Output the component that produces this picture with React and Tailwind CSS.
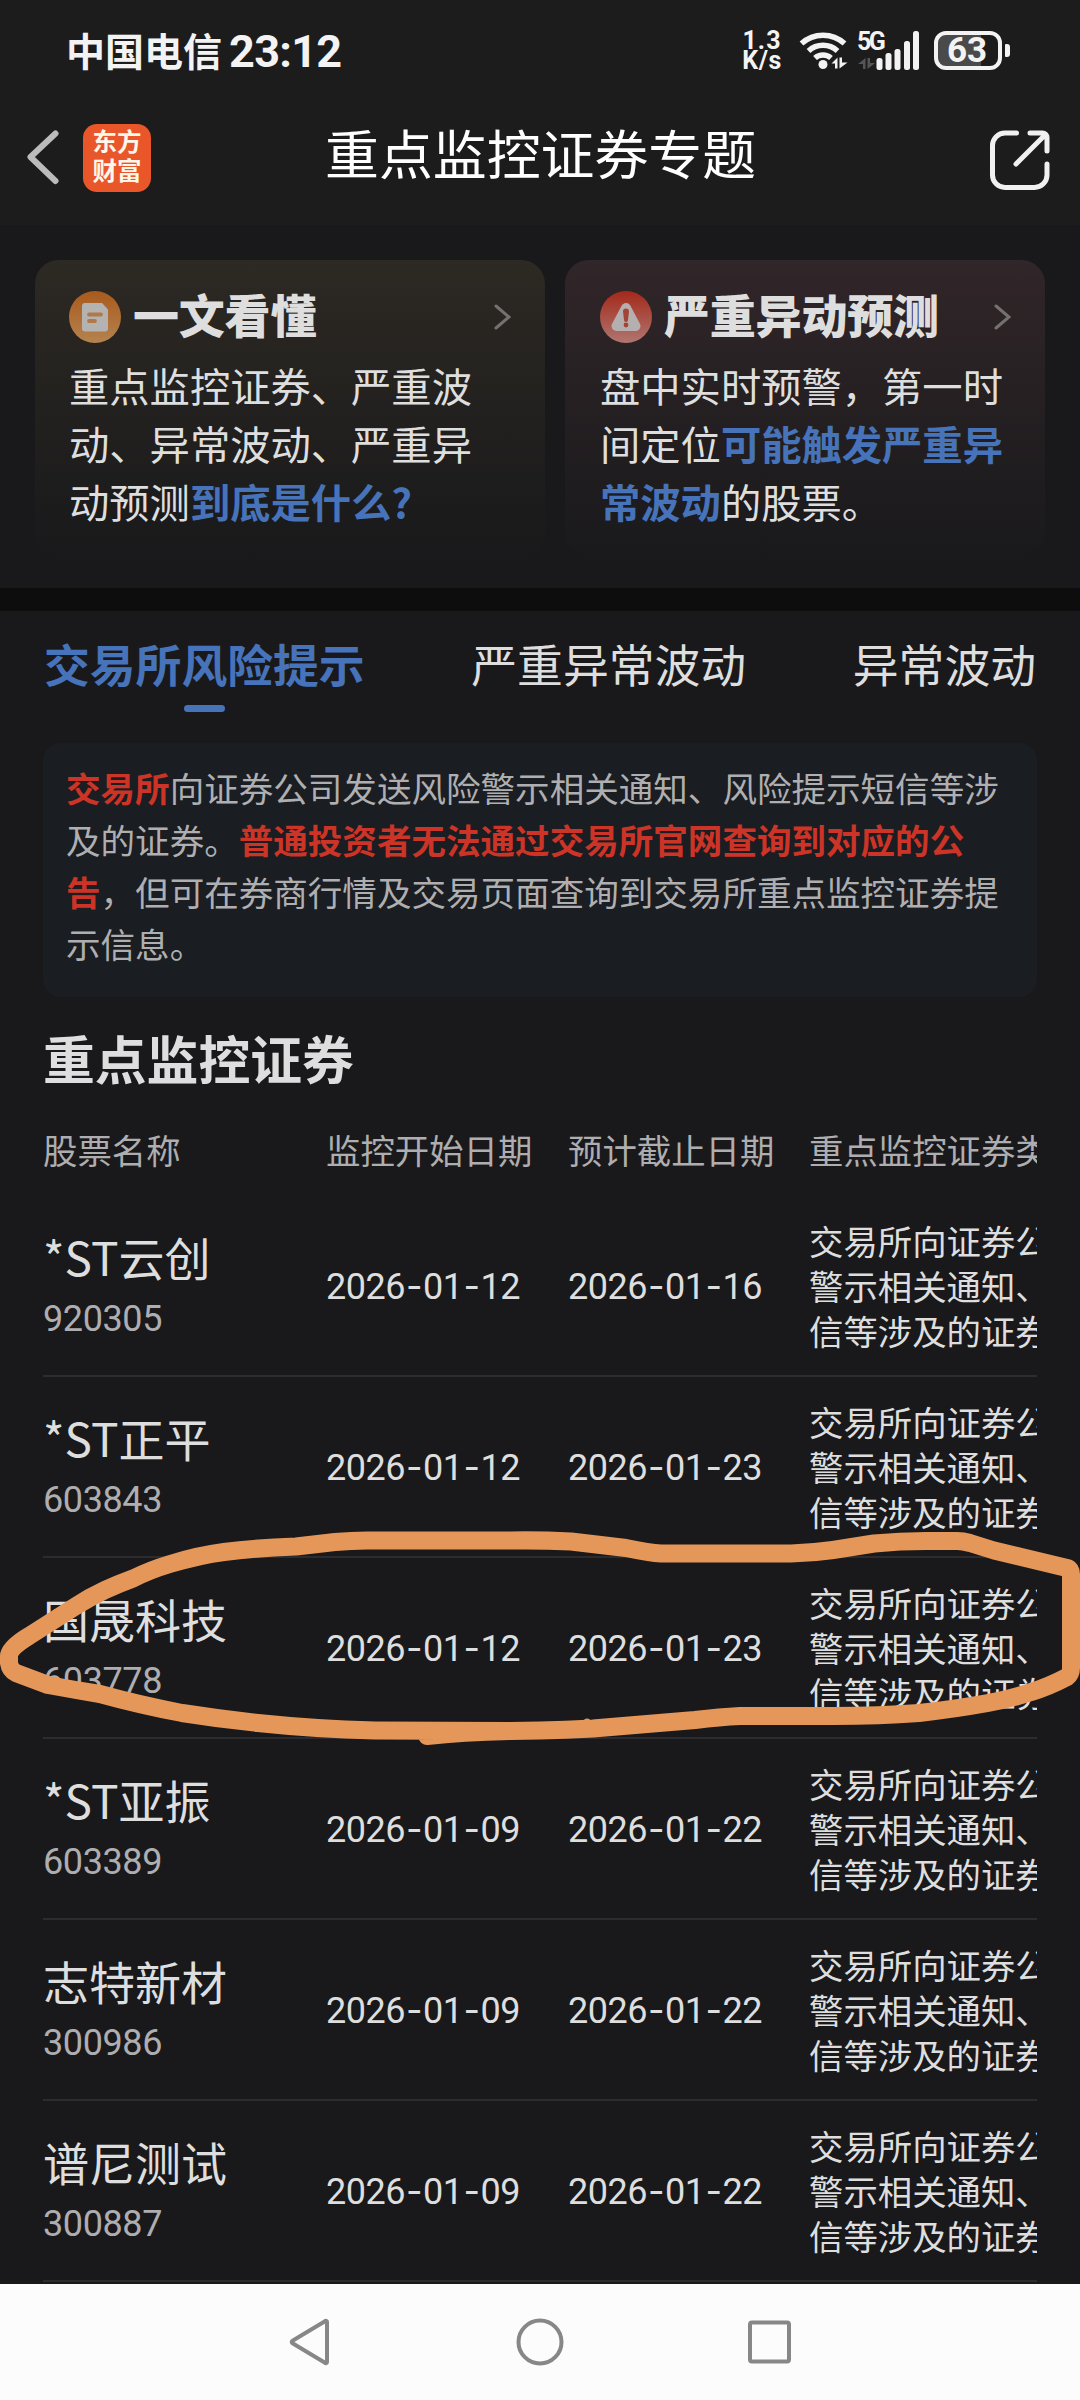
import { clsx } from 'clsx'

const CATEGORY = '交易所向证券公司发送风险警示相关通知、风险提示短信等涉及的证券'

const STOCKS = [
  { name: '*ST云创', code: '920305', start: '2026-01-12', end: '2026-01-16' },
  { name: '*ST正平', code: '603843', start: '2026-01-12', end: '2026-01-23' },
  { name: '国晟科技', code: '603778', start: '2026-01-12', end: '2026-01-23' },
  { name: '*ST亚振', code: '603389', start: '2026-01-09', end: '2026-01-22' },
  { name: '志特新材', code: '300986', start: '2026-01-09', end: '2026-01-22' },
  { name: '谱尼测试', code: '300887', start: '2026-01-09', end: '2026-01-22' },
]

const TABS = ['交易所风险提示', '严重异常波动', '异常波动']

function StatusBar() {
  return (
    <div className="flex h-[100px] items-start pl-[66px] pr-[70px] text-[#f3f3f3]">
      <div className="flex h-[100px] items-start">
        <span className="text-[39px] font-bold leading-[98px]">中国电信</span>
        <span className="ml-[7px] font-['Roboto'] text-[45px] font-bold leading-[103px] tracking-[-0.7px]">23:12</span>
      </div>
      <div className="ml-auto mt-[31px] flex h-[39px] items-start">
        <div className="flex w-[42px] flex-col items-center font-['Roboto'] text-[25px] font-bold leading-[20px]">
          <span className="tracking-[1px]">1.3</span>
          <span className="tracking-[0.500px]">K/s</span>
        </div>
        <svg className="ml-[16px]" width="50" height="39" viewBox="0 0 50 39" fill="none" stroke="currentColor" strokeWidth="5.500">
          <path d="M2.500 12.500a32 32 0 0 1 43 0" />
          <path d="M9.500 20a21.500 21.500 0 0 1 29 0" />
          <path d="M16 27a12 12 0 0 1 16 0" />
          <circle cx="24" cy="33.500" r="4.500" fill="currentColor" stroke="none" />
          <path d="M38.500 26.500v11h-2.500v-5h-3.500zM40.500 37.500v-11h2.500v5h5.500z" fill="currentColor" stroke="none" />
        </svg>
        <div className="relative ml-[9px] h-[39px] w-[64px]">
          <span className="absolute -left-px top-0 font-['Roboto'] text-[25px] font-bold leading-[21px] tracking-[-2.500px]">5G</span>
          <svg width="64" height="39" viewBox="0 0 64 39" fill="currentColor">
            <path d="M7.500 27v11H5v-5H0zM9.500 38V27H12v5h5z" fill="#555" />
            <rect x="18.500" y="27" width="6" height="12" rx="2.500" />
            <rect x="27.500" y="22" width="6" height="17" rx="2.500" />
            <rect x="36.500" y="18" width="6" height="21" rx="2.500" />
            <rect x="46" y="10" width="6" height="29" rx="2.500" />
            <rect x="55" y="0" width="6" height="39" rx="2.500" />
          </svg>
        </div>
        <div className="ml-[12px] flex items-center">
          <div className="flex h-[39px] w-[68px] items-center justify-center rounded-[12px] border-4 border-[#f3f3f3] bg-linear-to-r from-[#4a4a4a] from-[72%] to-transparent to-[72%]">
            <span className="-ml-[2px] font-['Roboto'] text-[35px] font-bold leading-none">63</span>
          </div>
          <div className="ml-[3px] h-[13px] w-[5px] rounded-r-[3px] rounded-l-[1px] bg-[#f3f3f3]" />
        </div>
      </div>
    </div>
  )
}

function TitleBar() {
  return (
    <div className="flex h-[125px] items-start pl-[26px] pr-[28px] text-white">
      <svg className="mt-[29px]" width="34" height="56" viewBox="0 0 34 56" fill="none">
        <path d="M29.500 4.500 L4.500 28 L29.500 52" stroke="#bbb" strokeWidth="6" strokeLinecap="round" strokeLinejoin="round" />
      </svg>
      <div className="ml-[23px] mt-[24px] flex h-[68px] w-[68px] flex-col items-center justify-center rounded-[14px] bg-[#e8562a] pb-[6px] text-[24.500px] font-bold leading-[29px] text-[#fff6ea]">
        <span>东方</span>
        <span>财富</span>
      </div>
      <h1 className="ml-[174px] text-[53.900px] font-normal leading-[104px]">重点监控证券专题</h1>
      <svg className="ml-auto mt-[28px]" width="64" height="64" viewBox="0 0 64 64" fill="none" stroke="#f0f0f0" strokeWidth="5" strokeLinecap="round" strokeLinejoin="round">
        <path d="M28.500 5H17A12.500 12.500 0 0 0 4.500 17.500V47A12.500 12.500 0 0 0 17 59.500h29.500A12.500 12.500 0 0 0 59 47V36" />
        <path d="M42 5h12.500a4.500 4.500 0 0 1 4.500 4.500V23M56.500 7.500 28 36" />
      </svg>
    </div>
  )
}

function DocIcon() {
  return (
    <svg width="52" height="52" viewBox="0 0 52 52">
      <defs>
        <linearGradient id="doc" x1="0" y1="0" x2="0" y2="1">
          <stop offset="0" stopColor="#a85a1d" />
          <stop offset="1" stopColor="#b5834f" />
        </linearGradient>
      </defs>
      <circle cx="26" cy="26" r="26" fill="url(#doc)" />
      <path d="M16 12h17l6 6.500V37.500a3 3 0 0 1-3 3H16a3 3 0 0 1-3-3V15a3 3 0 0 1 3-3z" fill="#b5b3b1" />
      <path d="M20 23.500h12M20 30h6" stroke="#b07a48" strokeWidth="3.800" strokeLinecap="round" />
    </svg>
  )
}

function AlertIcon() {
  return (
    <svg width="52" height="52" viewBox="0 0 52 52">
      <defs>
        <linearGradient id="alert" x1="0" y1="0" x2="0" y2="1">
          <stop offset="0" stopColor="#a3291a" />
          <stop offset="1" stopColor="#b07670" />
        </linearGradient>
      </defs>
      <circle cx="26" cy="26" r="26" fill="url(#alert)" />
      <path d="M26 17 L35.500 35 H16.500 Z" fill="#b5b0af" stroke="#b5b0af" strokeWidth="10" strokeLinejoin="round" />
      <path d="M23 20.500a3 3 0 0 1 6 0l-1 8.500a2 2 0 0 1-4 0z" fill="#a34438" />
      <circle cx="26" cy="34" r="2.400" fill="#a34438" />
    </svg>
  )
}

function EntryCard({ icon, title, className, children }) {
  return (
    <div className={clsx('h-[298px] rounded-[24px] bg-linear-to-b to-[#19191b] pt-[28px]', className)}>
      <div className="flex h-[58px] items-center">
        {icon}
        <h2 className="-mt-[9px] ml-[12px] text-[46px] font-black leading-[52px] tracking-[-0.2px]">{title}</h2>
        <svg className="ml-auto" width="18" height="26" viewBox="0 0 18 26" fill="none">
          <path d="M3 2 L16 13 L3 24" stroke="#74726f" strokeWidth="3" strokeLinecap="round" />
        </svg>
      </div>
      <p className="mt-[10px] whitespace-nowrap text-[40.300px] leading-[58px]">{children}</p>
    </div>
  )
}

function Em({ children }) {
  return <b className="font-bold text-[#4673b9]">{children}</b>
}

function Entries() {
  return (
    <div className="flex h-[363px] gap-[20px] px-[35px] pt-[35px]">
      <EntryCard icon={<DocIcon />} title="一文看懂" className="w-[510px] from-[#2d2923] pl-[34px] pr-[34px]">
        重点监控证券、严重波<br />
        动、异常波动、严重异<br />
        动预测<Em>到底是什么?</Em>
      </EntryCard>
      <EntryCard icon={<AlertIcon />} title="严重异动预测" className="w-[480px] from-[#312629] pl-[35px] pr-[34px]">
        盘中实时预警，第一时<br />
        间定位<Em>可能触发严重异</Em><br />
        <Em>常波动</Em>的股票。
      </EntryCard>
    </div>
  )
}

function Tabs() {
  return (
    <div className="flex h-[132px] justify-between px-[44px] pt-[24px] text-[45.800px] leading-[56px]">
      {TABS.map((tab, i) => (
        <div key={tab} className={clsx('flex flex-col items-center', i === 0 && 'font-bold text-[#4673b9]')}>
          <span>{tab}</span>
          {i === 0 && <div className="mt-[14px] h-[7px] w-[41px] rounded-full bg-[#4673b9]" />}
        </div>
      ))}
    </div>
  )
}

function Notice() {
  return (
    <div className="mx-[43px] h-[254px] whitespace-nowrap rounded-[18px] bg-[#1a1d21] pl-[23px] pt-[18px] text-[34.550px] leading-[52px] text-[#afafb1]">
      <b className="text-[#cb3426]">交易所</b>向证券公司发送风险警示相关通知、风险提示短信等涉<br />
      及的证券。<b className="text-[#cb3426]">普通投资者无法通过交易所官网查询到对应的公</b><br />
      <b className="text-[#cb3426]">告</b>，但可在券商行情及交易页面查询到交易所重点监控证券提<br />
      示信息。
    </div>
  )
}

function DateCell({ value }) {
  const [y, m, d] = value.split('-')
  const dash = <span className="inline-block w-[18px] text-center font-['Inter']">-</span>
  return (
    <div className="self-center pt-[2px] font-['Roboto'] text-[36px] leading-[46px] tracking-[-0.500px]">
      {y}{dash}{m}{dash}{d}
    </div>
  )
}

function StockTable() {
  return (
    <div className="mx-[43px] overflow-hidden">
      <div className="grid h-[89px] grid-cols-[283px_242px_241px_414px] whitespace-nowrap pt-[17px] text-[34.400px] leading-[50px] text-[#aeaeb0]">
        <span>股票名称</span>
        <span>监控开始日期</span>
        <span>预计截止日期</span>
        <span>重点监控证券类型</span>
      </div>
      {STOCKS.map((s) => (
        <div key={s.code} className="grid h-[181px] grid-cols-[283px_242px_241px_414px] border-b-2 border-[#2c2c2e]">
          <div className="pt-[29px]">
            <div className="text-[46px] leading-[62px]">{s.name}</div>
            <div className="pt-[4px] font-['Roboto'] text-[36px] leading-[56px] tracking-[-0.400px] text-[#aeaeb0]">{s.code}</div>
          </div>
          <DateCell value={s.start} />
          <DateCell value={s.end} />
          <div className="pt-[22px] text-[34.400px] leading-[45px]">{CATEGORY}</div>
        </div>
      ))}
    </div>
  )
}

// Freehand marker stroke around the highlighted row
function MarkerCircle() {
  return (
    <svg className="pointer-events-none absolute left-0 top-[1520px]" width="1080" height="240" viewBox="0 1520 1080 240" fill="none" stroke="#e59759" strokeWidth="18" strokeLinecap="round" strokeLinejoin="round">
      <path d="M427 1736 Q462 1732 510 1731 L540 1730.500 Q565 1730 593 1728.500 L695 1720 Q720 1717 740 1716 L833 1716 Q880 1716 919 1713 Q955 1709 988 1703 Q1010 1699 1031 1692 Q1048 1687 1067 1677 Q1071 1674 1071 1668 L1071 1574 Q1071 1569 1067 1568 L994 1550.500 L970 1543 Q963 1541 957 1541 L926 1541 Q900 1541 874 1543.500 L833 1550 Q812 1553 791 1553.500 L661 1553.500 Q650 1553 626 1548 L571 1541.500 Q540 1540 510 1540.500 L375 1540.500 Q355 1540 335 1542 L296 1546.500 Q255 1548 224 1552 Q200 1555 170 1564 Q150 1570 133 1578.500 Q118 1584 105 1590 Q90 1597 76 1606 L29 1636 Q9 1648 9 1656 L9 1663 Q10 1670 16 1673 L48 1685 Q75 1690 100 1694 Q140 1705 182 1713 Q220 1719 258 1723 Q315 1729 375 1730.500 L520 1731" />
      <circle cx="587" cy="1722" r="3.500" fill="#e59759" stroke="none" />
    </svg>
  )
}

function NavBar() {
  return (
    <div className="flex h-[116px] items-center justify-center gap-[184px] bg-[#fcfcfc]">
      <svg width="48" height="52" viewBox="0 0 48 52" fill="none" stroke="#878787" strokeWidth="4" strokeLinejoin="round">
        <path d="M41 5.200a1.200 1.200 0 0 1 2 .8V46a1.200 1.200 0 0 1-2 .8L8.500 27.300a1.500 1.500 0 0 1 0-2.600z" />
      </svg>
      <svg width="48" height="52" viewBox="0 0 48 52" fill="none" stroke="#878787" strokeWidth="4">
        <circle cx="24" cy="26" r="21.500" />
      </svg>
      <svg width="48" height="52" viewBox="0 0 48 52" fill="none" stroke="#878787" strokeWidth="4">
        <rect x="2" y="6.500" width="39" height="39" rx="2" />
      </svg>
    </div>
  )
}

export default function App() {
  return (
    <div className="relative flex h-[2400px] w-[1080px] flex-col overflow-hidden bg-[#19191b] font-['Noto_Sans_CJK_SC',sans-serif] text-[#dedede]">
      <header className="h-[225px] bg-[#1c1c1c]">
        <StatusBar />
        <TitleBar />
      </header>
      <Entries />
      <div className="h-[23px] bg-[#0d0d0d]" />
      <main className="h-[1673px] overflow-hidden">
        <Tabs />
        <Notice />
        <h2 className="ml-[43px] h-[110px] pt-[26px] text-[51.800px] font-bold leading-[70px]">重点监控证券</h2>
        <StockTable />
      </main>
      <NavBar />
      <MarkerCircle />
    </div>
  )
}
